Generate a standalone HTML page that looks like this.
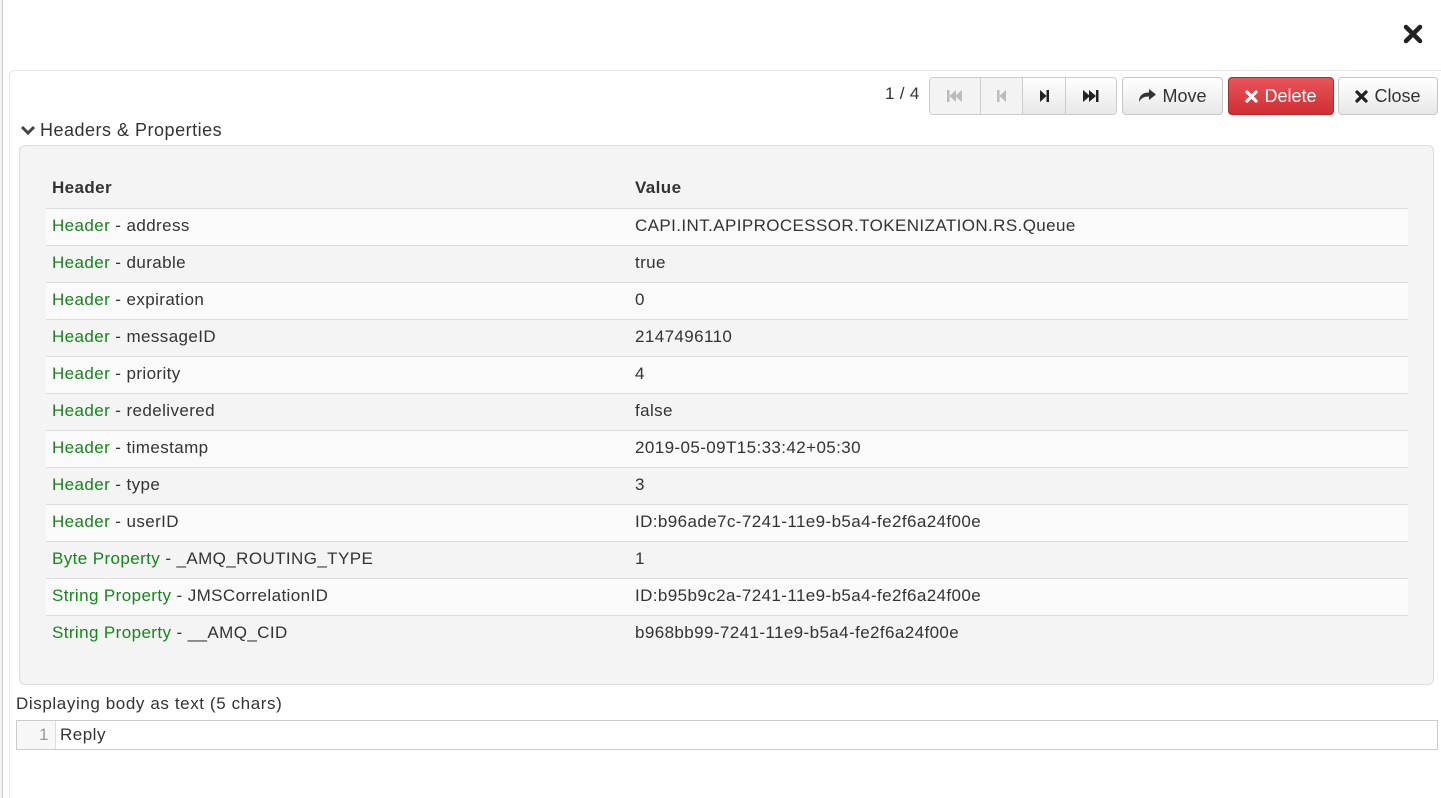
<!DOCTYPE html>
<html><head><meta charset="utf-8"><style>
*{box-sizing:border-box;margin:0;padding:0}
body{width:1441px;height:798px;overflow:hidden;background:#fff;font-family:"Liberation Sans",sans-serif;color:#333;position:relative}
.leftedge{position:absolute;left:0;top:0;width:3px;height:798px;background:#f3f3f3;border-right:1px solid #ccc}
.inner{position:absolute;left:9px;top:70px;width:1432px;height:728px;border-top:1px solid #e6e6e6;border-left:1px solid #e6e6e6;border-radius:6px 0 0 0;background:#fff}
.x{position:absolute;left:1403px;top:24px}
.pager{position:absolute;left:885px;top:84px;font-size:17px;color:#333;letter-spacing:0.3px}
.btn{position:absolute;top:77px;height:38px;border:1px solid #c6c6c6;border-radius:4px;background:linear-gradient(#fff,#e8e8e8);font-size:18px;color:#333;display:flex;align-items:center;justify-content:center;gap:6px}
.grp{position:absolute;left:929px;top:77px;height:38px;width:188px;display:flex;border:1px solid #ccc;border-radius:4px;overflow:hidden}
.grp div{height:100%;display:flex;align-items:center;justify-content:center;border-right:1px solid #ccc}
.title{position:absolute;left:20px;top:120px;font-size:18px;color:#333;letter-spacing:0.5px}
.panel{position:absolute;left:19px;top:145px;width:1415px;height:540px;background:#f4f4f4;border:1px solid #ddd;border-radius:6px}
table{position:absolute;left:26px;top:24px;width:1362px;border-collapse:collapse;font-size:17px;letter-spacing:0.4px}
td,th{height:37px;padding:0 6px 2px;text-align:left;border-top:1px solid #ddd;vertical-align:middle}
th{border-top:none;font-weight:bold;height:38px;padding-top:1px}
tr:nth-child(even) td{background:#fafafa}
td:first-child{width:583px}
.g{color:#15861a}
.disp{position:absolute;left:16px;top:694px;font-size:17px;letter-spacing:0.6px}
.body{position:absolute;left:16px;top:720px;width:1422px;height:30px;border:1px solid #ccc;display:flex;font-size:17px;letter-spacing:0.5px}
.gut{width:39px;background:#f7f7f7;border-right:1px solid #ddd;color:#999;text-align:right;padding-right:6px;line-height:27px}
.code{padding-left:4px;line-height:27px}
</style></head><body>
<div class="leftedge"></div>
<div class="inner"></div>
<svg class="x" width="20" height="20" viewBox="0 0 20 20"><path d="M3 3L17 17M17 3L3 17" stroke="#222" stroke-width="4.5" stroke-linecap="round"/></svg>
<div class="pager">1 / 4</div>
<div class="grp">
<div style="width:51px;background:#f3f3f3"><svg width="18" height="14"><path d="M1 1h2.5v12H1zM3.5 7L10 1v12zM9 7L16 1v12z" fill="#bbb"/></svg></div>
<div style="width:42px;background:#f3f3f3"><svg width="12" height="14"><path d="M1 1h2.5v12H1zM3.5 7L10 1v12z" fill="#bbb"/></svg></div>
<div style="width:43px;background:linear-gradient(#fff,#e8e8e8)"><svg width="12" height="14"><path d="M2 1l6.5 6L2 13zM8.5 1H11v12H8.5z" fill="#222"/></svg></div>
<div style="flex:1;border-right:none;background:linear-gradient(#fff,#e8e8e8)"><svg width="18" height="14"><path d="M1 1l7 6-7 6zM7 1l7 6-7 6zM14 1h2.5v12H14z" fill="#222"/></svg></div>
</div>
<div class="btn" style="left:1122px;width:101px"><svg width="18" height="14" viewBox="0 0 18 14"><path d="M11 0l7 5.5L11 11V7.5C6 7.5 3 9 1 13 1 7 4 3.5 11 3.5z" fill="#333"/></svg>Move</div>
<div class="btn" style="left:1228px;width:106px;background:linear-gradient(#e9545a,#cf2f33);border-color:#b52a2d;color:#fff"><svg width="13" height="13" viewBox="0 0 13 13"><path d="M2 2l9 9M11 2l-9 9" stroke="#fff" stroke-width="3.3" stroke-linecap="round"/></svg>Delete</div>
<div class="btn" style="left:1338px;width:100px"><svg width="13" height="13" viewBox="0 0 13 13"><path d="M2 2l9 9M11 2l-9 9" stroke="#222" stroke-width="3.3" stroke-linecap="round"/></svg>Close</div>
<div class="title"><svg width="16" height="12" viewBox="0 0 16 12" style="margin-right:4px"><path d="M2 3l6 6 6-6" stroke="#444" stroke-width="3" fill="none"/></svg>Headers &amp; Properties</div>
<div class="panel"><table>
<tr><th>Header</th><th>Value</th></tr>
<tr><td><span class="g">Header</span> - address</td><td>CAPI.INT.APIPROCESSOR.TOKENIZATION.RS.Queue</td></tr>
<tr><td><span class="g">Header</span> - durable</td><td>true</td></tr>
<tr><td><span class="g">Header</span> - expiration</td><td>0</td></tr>
<tr><td><span class="g">Header</span> - messageID</td><td>2147496110</td></tr>
<tr><td><span class="g">Header</span> - priority</td><td>4</td></tr>
<tr><td><span class="g">Header</span> - redelivered</td><td>false</td></tr>
<tr><td><span class="g">Header</span> - timestamp</td><td>2019-05-09T15:33:42+05:30</td></tr>
<tr><td><span class="g">Header</span> - type</td><td>3</td></tr>
<tr><td><span class="g">Header</span> - userID</td><td>ID:b96ade7c-7241-11e9-b5a4-fe2f6a24f00e</td></tr>
<tr><td><span class="g">Byte Property</span> - _AMQ_ROUTING_TYPE</td><td>1</td></tr>
<tr><td><span class="g">String Property</span> - JMSCorrelationID</td><td>ID:b95b9c2a-7241-11e9-b5a4-fe2f6a24f00e</td></tr>
<tr><td><span class="g">String Property</span> - __AMQ_CID</td><td>b968bb99-7241-11e9-b5a4-fe2f6a24f00e</td></tr>
</table></div>
<div class="disp">Displaying body as text (5 chars)</div>
<div class="body"><div class="gut">1</div><div class="code">Reply</div></div>
</body></html>
